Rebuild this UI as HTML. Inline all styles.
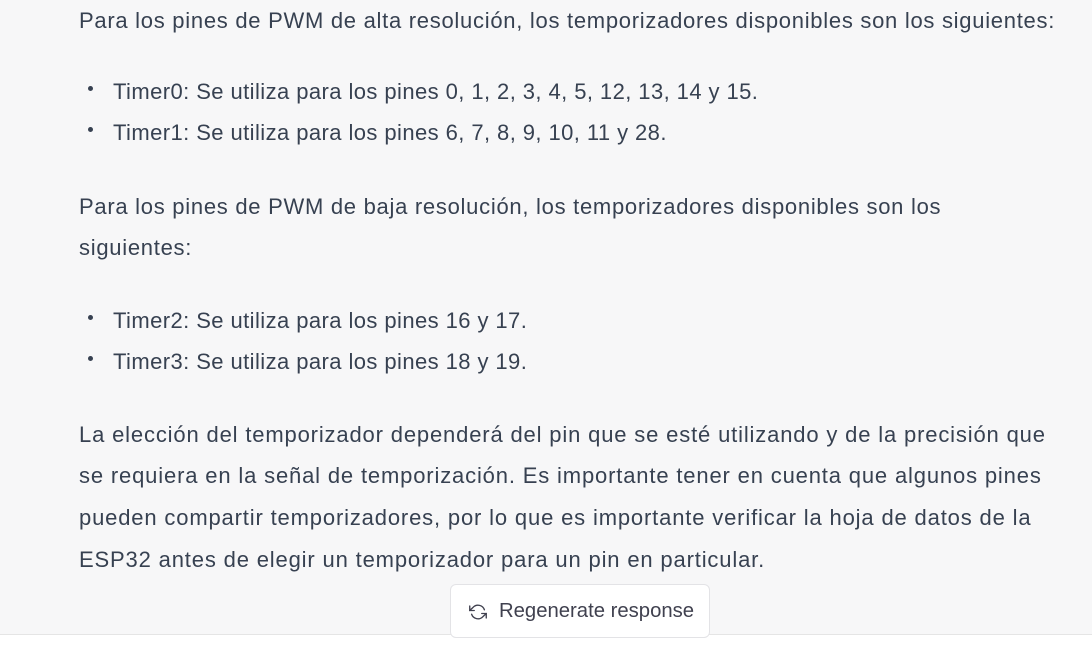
<!DOCTYPE html>
<html><head><meta charset="utf-8"><style>
body{margin:0;width:1092px;height:649px;background:#f7f7f8;overflow:hidden;position:relative;font-family:"Liberation Sans",sans-serif;color:#374151;font-size:22px;letter-spacing:0.72px}
.l{position:absolute;left:79px;white-space:nowrap;height:41px;line-height:41px}
.b{left:113px;letter-spacing:0.42px}
.p3{letter-spacing:0.84px}
.d{position:absolute;left:88px;width:5px;height:5px;border-radius:50%;background:#374151}
.strip{position:absolute;left:0;top:634px;width:1092px;height:15px;background:#fff;border-top:1px solid #e5e5e5}
.btn{position:absolute;left:450px;top:584px;width:260px;height:54px;background:#fff;border:1px solid #e3e3e6;border-radius:6px;box-sizing:border-box;font-size:20.3px;letter-spacing:0;color:#40414f}
.btn span{position:absolute;left:48px;top:15px}
.btn svg{position:absolute;left:18px;top:18px}
</style></head><body>
<div class="l" style="top:0px">Para los pines de PWM de alta resolución, los temporizadores disponibles son los siguientes:</div>
<div class="d" style="top:86px"></div><div class="l b" style="top:71px">Timer0: Se utiliza para los pines 0, 1, 2, 3, 4, 5, 12, 13, 14 y 15.</div>
<div class="d" style="top:127px"></div><div class="l b" style="top:112px">Timer1: Se utiliza para los pines 6, 7, 8, 9, 10, 11 y 28.</div>
<div class="l" style="top:186px">Para los pines de PWM de baja resolución, los temporizadores disponibles son los</div>
<div class="l" style="top:227px">siguientes:</div>
<div class="d" style="top:315px"></div><div class="l b" style="top:300px">Timer2: Se utiliza para los pines 16 y 17.</div>
<div class="d" style="top:356px"></div><div class="l b" style="top:341px">Timer3: Se utiliza para los pines 18 y 19.</div>
<div class="l p3" style="top:414px">La elección del temporizador dependerá del pin que se esté utilizando y de la precisión que</div>
<div class="l p3" style="top:455px">se requiera en la señal de temporización. Es importante tener en cuenta que algunos pines</div>
<div class="l p3" style="top:497px">pueden compartir temporizadores, por lo que es importante verificar la hoja de datos de la</div>
<div class="l p3" style="top:539px">ESP32 antes de elegir un temporizador para un pin en particular.</div>
<div class="strip"></div>
<div class="btn"><svg width="18" height="18" viewBox="0 0 24 24" fill="none" stroke="#40414f" stroke-width="1.8" stroke-linecap="round" stroke-linejoin="round"><polyline points="1 4 1 10 7 10"/><polyline points="23 20 23 14 17 14"/><path d="M20.5 9A9 9 0 0 0 5.6 5.6L1 10m22 4l-4.6 4.4A9 9 0 0 1 3.5 15"/></svg><span>Regenerate response</span></div>
</body></html>
